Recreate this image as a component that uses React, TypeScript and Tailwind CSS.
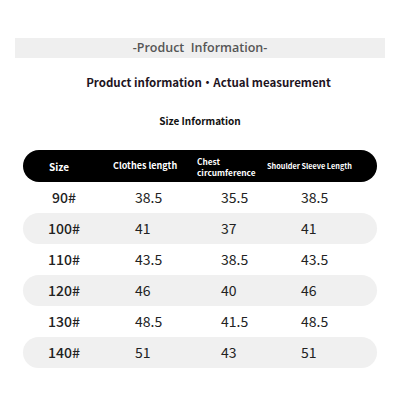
import React from "react";

const rows = [
  ["90#", "38.5", "35.5", "38.5"],
  ["100#", "41", "37", "41"],
  ["110#", "43.5", "38.5", "43.5"],
  ["120#", "46", "40", "46"],
  ["130#", "48.5", "41.5", "48.5"],
  ["140#", "51", "43", "51"],
];

const cjk = { fontFamily: '"Noto Sans CJK SC", "Noto Sans", sans-serif' };

export default function App() {
  return (
    <div className="w-[400px] h-[412px] bg-white flex flex-col" style={cjk}>
      <div className="mt-[38px] mx-[15px] h-[20px] bg-[#efefef] flex items-center justify-center">
        <span
          className="text-[12.5px] font-semibold text-[#555] whitespace-pre leading-none"
          style={{ fontFamily: '"Open Sans", sans-serif' }}
        >
          {"-Product  Information-"}
        </span>
      </div>
      <div className="mt-[16px] pl-[17px] h-[18px] flex items-center justify-center text-[11.5px] font-bold text-[#1e141e] leading-none">
        Product information・Actual measurement
      </div>
      <div className="mt-[21px] h-[16px] flex items-center justify-center text-[10px] font-bold text-[#111] leading-none">
        Size Information
      </div>
      <div className="mt-[21px] mx-[23px] h-[32px] rounded-full bg-black text-white font-bold grid grid-cols-[90px_84px_70px_1fr] items-center">
        <div className="pl-[26px] text-[10px]">Size</div>
        <div className="text-[9px]">Clothes length</div>
        <div className="text-[8.3px] leading-[11px] pt-[1px]">
          <div>Chest</div>
          <div>circumference</div>
        </div>
        <div className="text-[7.3px] whitespace-nowrap">Shoulder Sleeve Length</div>
      </div>
      <div className="mx-[23px] flex flex-col">
        {rows.map((r, i) => (
          <div
            key={r[0]}
            className={`h-[31px] rounded-full grid grid-cols-[112px_86px_80px_1fr] items-center text-[14px] text-[#222] ${
              i % 2 === 1 ? "bg-[#f0f0f0]" : ""
            }`}
          >
            <div className="w-[82px] text-center font-medium">{r[0]}</div>
            <div>{r[1]}</div>
            <div>{r[2]}</div>
            <div>{r[3]}</div>
          </div>
        ))}
      </div>
    </div>
  );
}
